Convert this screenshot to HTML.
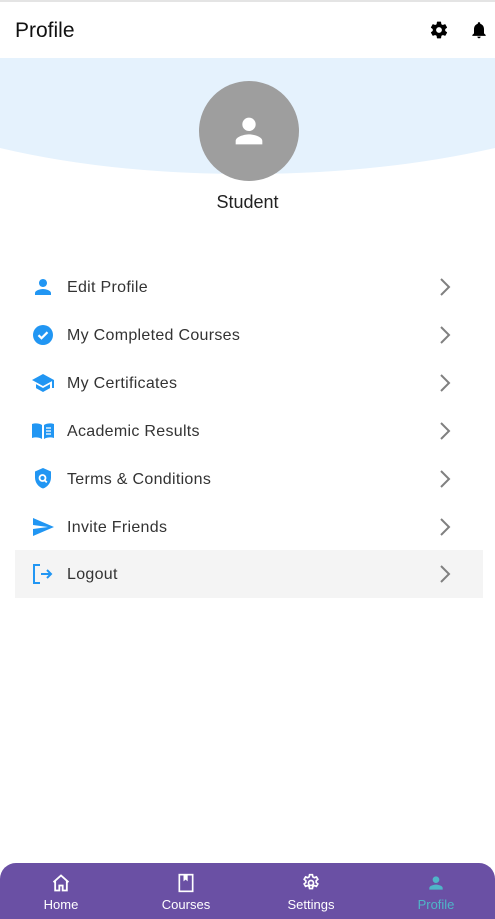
<!DOCTYPE html>
<html><head><meta charset="utf-8"><style>
*{margin:0;padding:0;box-sizing:border-box}
body{width:495px;height:919px;background:#fff;font-family:"Liberation Sans",sans-serif;position:relative;overflow:hidden;color:#222}
.topline{position:absolute;top:0;left:0;width:495px;height:2px;background:#e4e4e4}
.title{position:absolute;left:15px;top:19px;font-size:21px;color:#111}
.hdr-ic{position:absolute;top:20px}
.blue{position:absolute;top:58px;left:0;width:495px}
.avatar{position:absolute;left:199px;top:81px;width:100px;height:100px;border-radius:50%;background:#9e9e9e}
.name{position:absolute;top:192px;width:495px;text-align:center;font-size:18px;color:#222}
.row{position:absolute;left:15px;width:468px;height:48px}
.row .ic{position:absolute;left:16px;top:12px;width:24px;height:24px}
.row .t{position:absolute;left:52px;top:16px;font-size:16px;color:#333;letter-spacing:.3px}
.row .ch{position:absolute;left:418px;top:12px}
.nav{position:absolute;left:0;top:863px;width:495px;height:56px;background:#6a50a4;border-radius:16px 16px 0 0}
.ni{position:absolute;top:10px;width:80px;text-align:center;color:#fff;font-size:13px}
.ni svg{display:block;margin:0 auto 4px}
</style></head><body>
<div class="topline"></div>
<div class="title">Profile</div>
<svg class="hdr-ic" style="left:429px" width="20" height="20" viewBox="0 0 24 24"><path fill="#000" d="M19.4 13c.04-.32.1-.66.1-1s-.06-.68-.1-1l2.1-1.650c.2-.15.24-.42.12-.64l-2-3.46c-.12-.22-.39-.3-.61-.22l-2.490 1c-.52-.4-1.080-.73-1.690-.98l-.38-2.650A.49.49 0 0 0 14 2h-4c-.25 0-.46.18-.49.42l-.38 2.650c-.61.25-1.170.59-1.690.98l-2.490-1c-.23-.09-.49 0-.61.22l-2 3.46c-.13.22-.07.49.12.64L4.57 11c-.04.32-.07.66-.07 1s.03.68.07 1l-2.110 1.650c-.19.15-.24.42-.12.64l2 3.46c.12.22.39.3.61.22l2.490-1c.52.4 1.080.73 1.690.98l.38 2.650c.03.24.24.42.49.42h4c.25 0 .46-.18.49-.42l.38-2.650c.61-.25 1.170-.59 1.690-.98l2.490 1c.23.09.49 0 .61-.22l2-3.46c.12-.22.07-.49-.12-.64L19.4 13zM12 15.5A3.5 3.5 0 1 1 12 8.5a3.5 3.5 0 0 1 0 7z"/></svg>
<svg class="hdr-ic" style="left:469px" width="20" height="20" viewBox="0 0 24 24"><path fill="#000" d="M12 22c1.1 0 2-.9 2-2h-4c0 1.1.9 2 2 2zm6-6v-5c0-3.070-1.640-5.640-4.5-6.320V4c0-.83-.67-1.5-1.5-1.5s-1.5.67-1.5 1.5v.68C7.63 5.36 6 7.92 6 11v5l-2 2v1h16v-1l-2-2z"/></svg>
<svg class="blue" width="495" height="120" viewBox="0 0 495 120"><path fill="#e5f2fd" d="M0 0H495V90Q380 116 247 116Q110 116 0 90Z"/></svg>
<div class="avatar"><svg style="position:absolute;left:30px;top:30px" width="40" height="40" viewBox="0 0 24 24"><path fill="#fff" d="M12 12c2.21 0 4-1.790 4-4s-1.790-4-4-4-4 1.790-4 4 1.790 4 4 4zm0 2c-2.670 0-8 1.340-8 4v2h16v-2c0-2.660-5.330-4-8-4z"/></svg></div>
<div class="name">Student</div>

<div class="row" style="top:263px"><svg class="ic" viewBox="0 0 24 24"><path fill="#2196f3" d="M12 12c2.21 0 4-1.790 4-4s-1.790-4-4-4-4 1.790-4 4 1.790 4 4 4zm0 2c-2.670 0-8 1.340-8 4v2h16v-2c0-2.660-5.330-4-8-4z"/></svg><span class="t">Edit Profile</span><svg class="ch" width="24" height="24" viewBox="0 0 24 24"><path fill="none" stroke="#808080" stroke-width="2" d="M8 4l8 8-8 8"/></svg></div>
<div class="row" style="top:311px"><svg class="ic" viewBox="0 0 24 24"><circle cx="12" cy="12" r="10" fill="#2196f3"/><path fill="none" stroke="#fff" stroke-width="2.2" d="M7.5 12.2l3 3 6-6"/></svg><span class="t">My Completed Courses</span><svg class="ch" width="24" height="24" viewBox="0 0 24 24"><path fill="none" stroke="#808080" stroke-width="2" d="M8 4l8 8-8 8"/></svg></div>
<div class="row" style="top:359px"><svg class="ic" viewBox="0 0 24 24"><path fill="#2196f3" d="M5 13.18v4L12 21l7-3.820v-4L12 17l-7-3.820zM12 3L1 9l11 6 9-4.910V17h2V9L12 3z"/></svg><span class="t">My Certificates</span><svg class="ch" width="24" height="24" viewBox="0 0 24 24"><path fill="none" stroke="#808080" stroke-width="2" d="M8 4l8 8-8 8"/></svg></div>
<div class="row" style="top:407px"><svg class="ic" viewBox="0 0 24 24"><path fill="#2196f3" d="M1 5c3-1 7-1 10 1v14c-3-2-7-2-10-1zM13 6c3-2 7-2 10-1v14c-3-1-7-1-10 1z"/><path stroke="#fff" stroke-width="1.3" d="M15 9h5M15 12h5M15 15h5"/></svg><span class="t">Academic Results</span><svg class="ch" width="24" height="24" viewBox="0 0 24 24"><path fill="none" stroke="#808080" stroke-width="2" d="M8 4l8 8-8 8"/></svg></div>
<div class="row" style="top:455px"><svg class="ic" viewBox="0 0 24 24"><path fill="#2196f3" d="M12 1L4 4.5v6c0 5 3.4 9.7 8 11 4.6-1.3 8-6 8-11v-6z"/><circle cx="11.5" cy="11" r="3" fill="none" stroke="#fff" stroke-width="1.8"/><path stroke="#fff" stroke-width="1.8" d="M13.6 13.2l2.2 2.2"/></svg><span class="t">Terms &amp; Conditions</span><svg class="ch" width="24" height="24" viewBox="0 0 24 24"><path fill="none" stroke="#808080" stroke-width="2" d="M8 4l8 8-8 8"/></svg></div>
<div class="row" style="top:503px"><svg class="ic" viewBox="0 0 24 24"><path fill="#2196f3" d="M2 21l21-9L2 3v7l15 2-15 2z"/></svg><span class="t">Invite Friends</span><svg class="ch" width="24" height="24" viewBox="0 0 24 24"><path fill="none" stroke="#808080" stroke-width="2" d="M8 4l8 8-8 8"/></svg></div>
<div class="row" style="top:550px;background:#f4f4f4"><svg class="ic" viewBox="0 0 24 24"><path fill="none" stroke="#2196f3" stroke-width="2" d="M9 3H3v18h6M10 12h10M16 8l4 4-4 4"/></svg><span class="t">Logout</span><svg class="ch" width="24" height="24" viewBox="0 0 24 24"><path fill="none" stroke="#808080" stroke-width="2" d="M8 4l8 8-8 8"/></svg></div>

<div class="nav">
<div class="ni" style="left:21px"><svg width="20" height="20" viewBox="0 0 24 24"><path fill="none" stroke="#fff" stroke-width="2.2" d="M3 11L12 3l9 8M5 9v12h5v-6h4v6h5V9"/></svg>Home</div>
<div class="ni" style="left:146px"><svg width="20" height="20" viewBox="0 0 24 24"><rect x="4" y="2" width="16" height="20" fill="none" stroke="#fff" stroke-width="2"/><path fill="#fff" d="M9 2h5v8l-2.5-2L9 10z"/></svg>Courses</div>
<div class="ni" style="left:271px"><svg width="20" height="20" viewBox="0 0 24 24"><path fill="none" stroke="#fff" stroke-width="2" d="M10.3 2h3.4l.5 2.6 1.8 1 2.5-.9 1.7 2.9-2 1.7v2.1l2 1.7-1.7 2.9-2.5-.9-1.8 1-.5 2.6h-3.4l-.5-2.6-1.8-1-2.5.9-1.7-2.9 2-1.7V9.3l-2-1.7 1.7-2.9 2.5.9 1.8-1z"/><circle cx="12" cy="12" r="3" fill="none" stroke="#fff" stroke-width="2"/></svg>Settings</div>
<div class="ni" style="left:396px;color:#4fb5c8"><svg width="20" height="20" viewBox="0 0 24 24"><path fill="#4fb5c8" d="M12 12c2.21 0 4-1.790 4-4s-1.790-4-4-4-4 1.790-4 4 1.790 4 4 4zm0 2c-2.670 0-8 1.340-8 4v2h16v-2c0-2.660-5.330-4-8-4z"/></svg>Profile</div>
</div>
</body></html>
